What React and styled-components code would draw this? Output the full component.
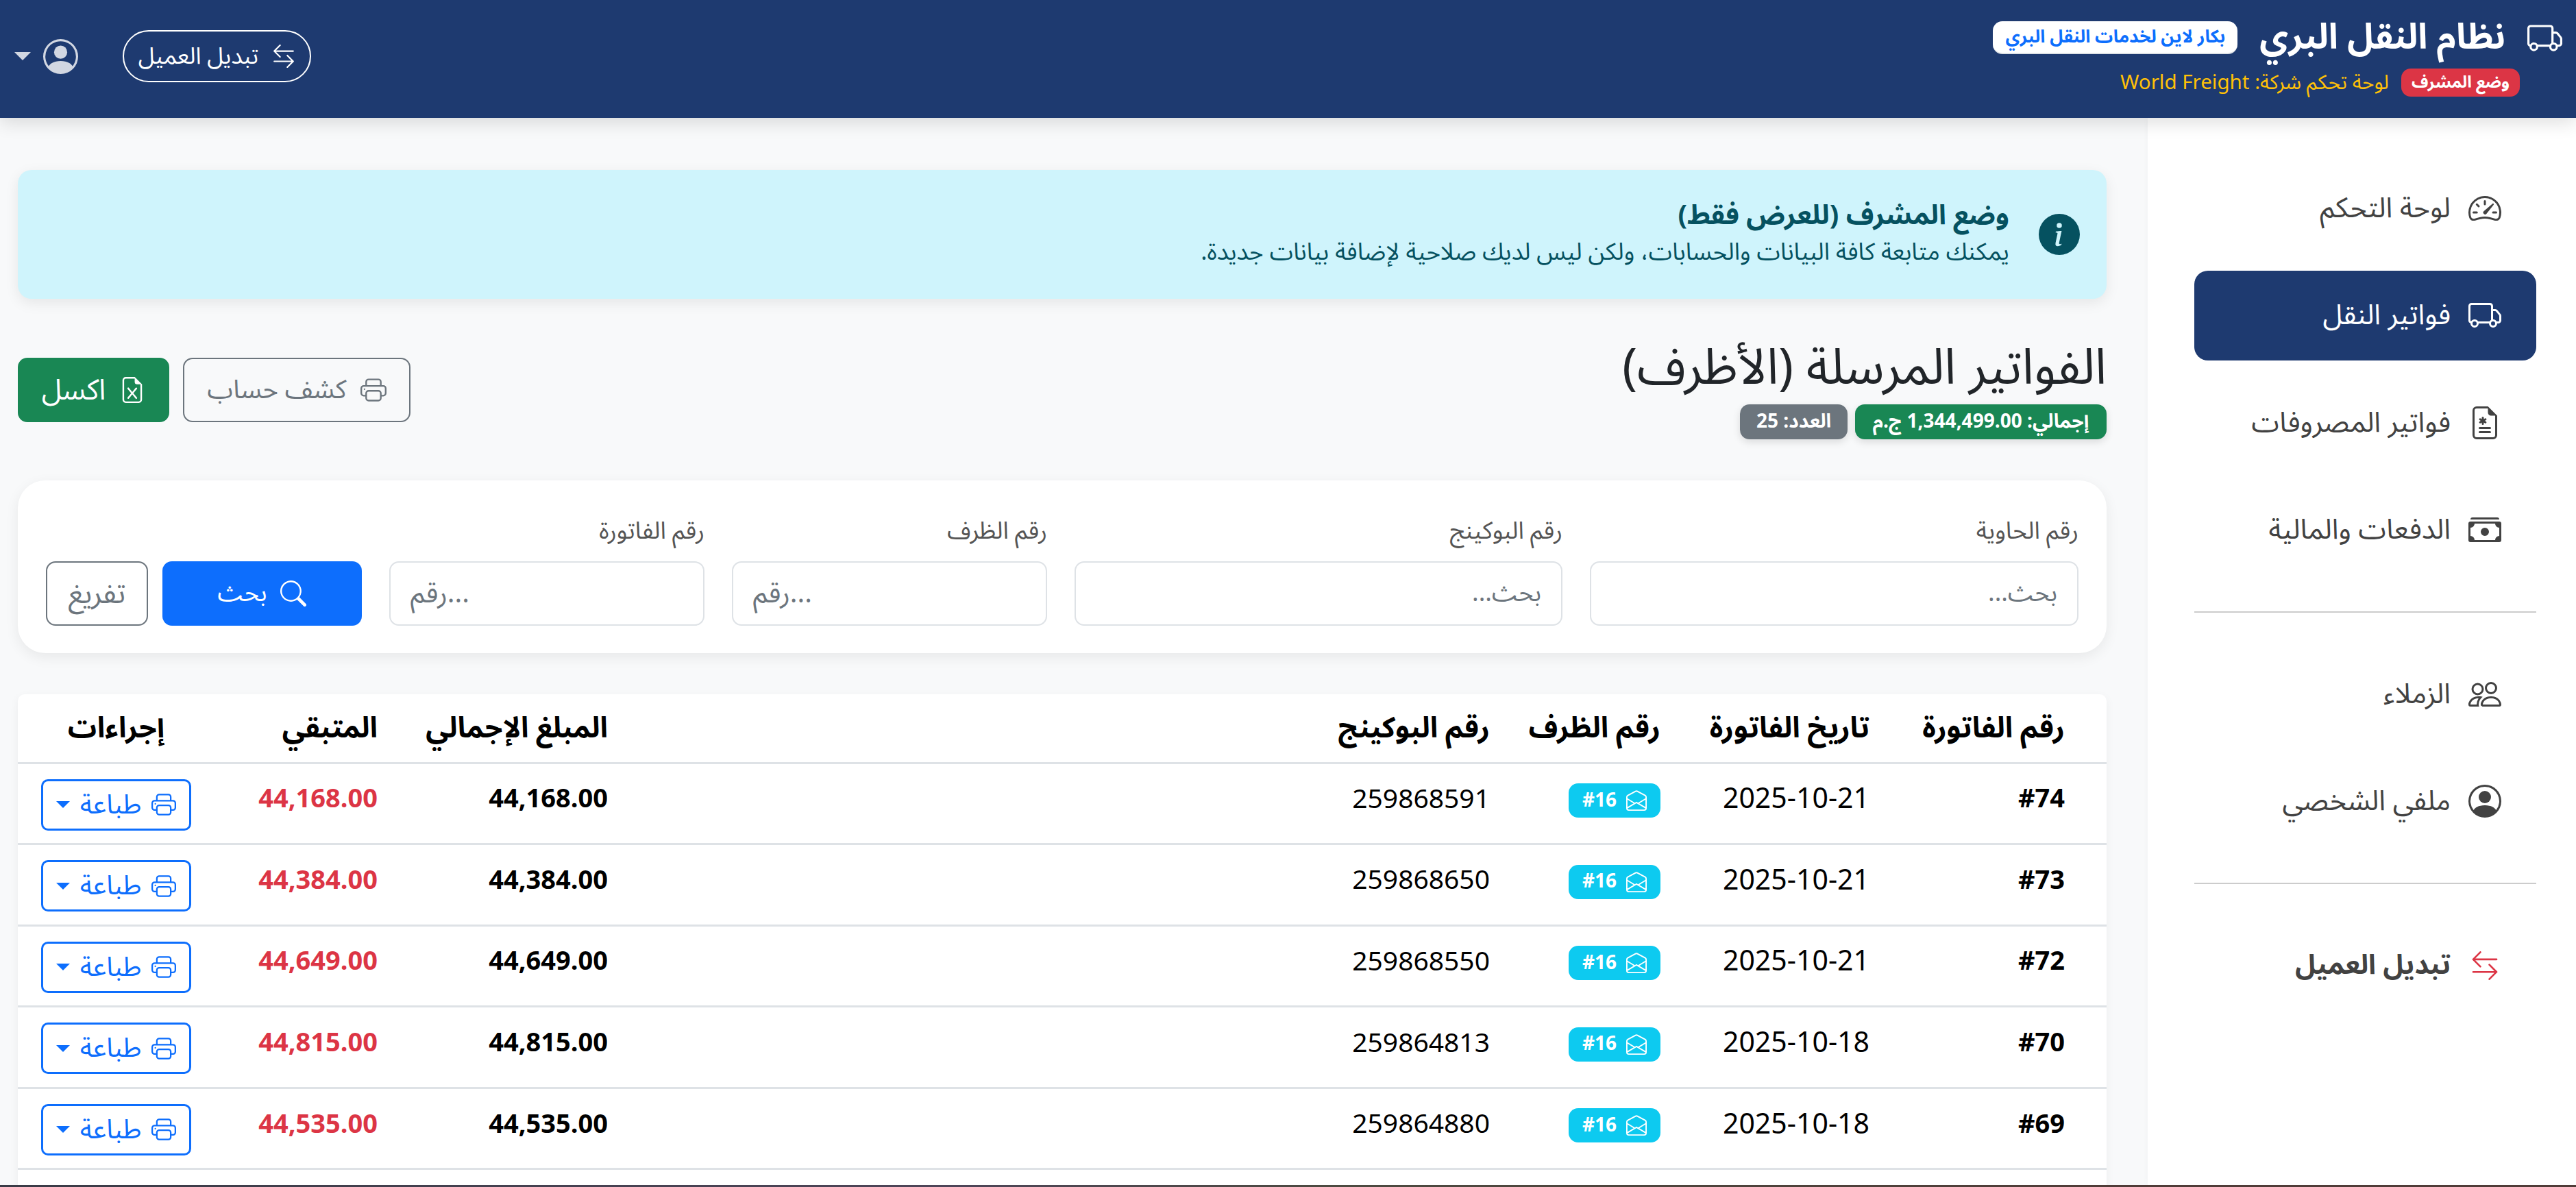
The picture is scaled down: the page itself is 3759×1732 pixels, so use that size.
import React from 'react';
import styled, { createGlobalStyle, css } from 'styled-components';
import { BsTruck, BsSpeedometer2, BsFileEarmarkMedical, BsCashStack, BsPeople, BsPersonCircle, BsArrowLeftRight, BsInfoCircleFill, BsPrinter, BsFileEarmarkExcel, BsSearch, BsEnvelopeOpen } from 'react-icons/bs';

const FONT = `"Noto Sans Arabic", "Noto Kufi Arabic", "Open Sans", "Noto Sans", "DejaVu Sans", sans-serif`;

const Global = createGlobalStyle`
  * { box-sizing: border-box; }
  html, body { margin: 0; height: 100%; }
  body { font-family: ${FONT}; background: #f8f9fa; color: #212529; overflow: hidden; }
`;

const Page = styled.div`
  direction: rtl;
  width: 3759px;
  height: 1732px;
  display: flex;
  flex-direction: column;
  overflow: hidden;
`;

const Header = styled.header`
  height: 172px;
  flex: none;
  background: #1e3a70;
  color: #fff;
  display: flex;
  justify-content: space-between;
  align-items: flex-start;
  padding: 25px 20px 0 21px;
  box-shadow: 0 8px 24px rgba(0,0,0,.12);
  position: relative;
  z-index: 2;
`;

const Brand = styled.div`display: flex; flex-direction: column; gap: 15px;`;
const BrandRow = styled.div`
  display: flex; align-items: center; gap: 32px; font-size: 51.5px; font-weight: 700; height: 60px; line-height: 60px;
  > svg { font-size: 51px; }
`;
const WhiteBadge = styled.span`
  background: #fff; color: #0d6efd; font-size: 26px; line-height: 48px; font-weight: 700;
  border-radius: 14px; width: 357px; height: 48px; display: inline-flex; align-items: center; justify-content: center;
  border-bottom: 2px solid #dee2e6;
`;
const BrandSub = styled.div`display: flex; align-items: center; gap: 18px; padding-right: 62px; font-size: 29.5px; color: #ffc107; height: 41px;`;
const RedBadge = styled.span`
  background: #dc3545; color: #fff; font-size: 24px; font-weight: 700; border-radius: 14px; width: 173px; height: 41px;
  display: inline-flex; align-items: center; justify-content: center;
`;
const HeaderEnd = styled.div`display: flex; align-items: center; gap: 65px; padding-top: 19px;`;
const SwitchButton = styled.button`
  font-family: inherit; background: none; color: #fff; border: 2px solid #fff; border-radius: 38px; height: 76px; width: 275px;
  font-size: 34px; display: flex; align-items: center; justify-content: center; gap: 20px; padding: 0;
  svg { font-size: 34px; }
`;
const UserMenu = styled.div`display: flex; align-items: center; gap: 18px; color: rgba(255,255,255,.8); font-size: 51px;`;
const Caret = styled.span`
  width: 0; height: 0; border-style: solid; border-color: currentColor transparent transparent transparent;
  border-width: ${p => p.$s || 12}px ${p => p.$s || 12}px 0 ${p => p.$s || 12}px;
`;

const Body = styled.div`flex: 1; display: flex; min-height: 0; overflow: hidden;`;

const Sidebar = styled.nav`
  width: 625px; flex: none; background: #fff; padding: 66px 58px 0 68px; display: flex; flex-direction: column;
  box-shadow: 0 0 10px rgba(0,0,0,.03);
`;
const NavItem = styled.a`
  height: 131px; flex: none; display: flex; align-items: center; gap: 26px; padding-right: 51px; border-radius: 20px; font-size: 41px; margin-bottom: 25.5px;
  color: ${p => p.$active ? '#fff' : '#424242'};
  background: ${p => p.$active ? '#1e3a70' : 'transparent'};
  svg { font-size: 48px; flex: none; }
  ${p => p.$switch && css`font-weight: 700; font-size: 40px; svg { color: #dc3545; font-size: 42px; margin: 0 3px; }`}
`;
const NavRule = styled.hr`
  border: 0; border-top: 2px solid #ccc; margin: 28px 0 0; width: 100%; flex: none;
`;
const NavGroupGap = styled.div`height: 53px; flex: none;`;

const Main = styled.main`flex: 1; min-width: 0; padding: 76px 60px 0 26px; display: flex; flex-direction: column;`;

const Alert = styled.div`
  height: 188px; background: #cff4fc; color: #055160; border-radius: 20px; display: flex; align-items: center; gap: 43px; padding: 0 39px;
  box-shadow: 0 6px 20px rgba(0,0,0,.08); flex: none;
  > svg { font-size: 60px; flex: none; }
`;
const AlertText = styled.div`padding-bottom: 4px;`;
const AlertTitle = styled.div`font-size: 40px; font-weight: 700; line-height: 56px;`;
const AlertBody = styled.div`font-size: 34.8px; line-height: 50px;`;

const TitleBar = styled.div`display: flex; justify-content: space-between; align-items: center; margin-top: 61px; flex: none;`;
const TitleBlock = styled.div`display: flex; flex-direction: column; gap: 13px;`;
const PageTitle = styled.h1`margin: 0; font-size: 72.5px; font-weight: 400; line-height: 80px; color: #212529;`;
const Badges = styled.div`display: flex; gap: 11px;`;
const Badge = styled.span`
  height: 51px; border-radius: 14px; width: ${p => p.$w}px; color: #fff; font-size: 28px; font-weight: 700; display: inline-flex; align-items: center; justify-content: center;
  background: ${p => p.$bg}; box-shadow: 0 4px 12px rgba(0,0,0,.12);
`;
const Actions = styled.div`display: flex; gap: 20px;`;
const Btn = styled.button`
  font-family: inherit; height: 94px; border-radius: 14px; font-size: ${p => p.$fs || 38}px; display: inline-flex; align-items: center; justify-content: center; gap: 20px; padding: 0;
  width: ${p => p.$w}px;
  ${p => p.$kind === 'green' && css`background:#198754;color:#fff;border:0;`}
  ${p => p.$kind === 'gray' && css`background:transparent;color:#6c757d;border:2px solid #6c757d;`}
  ${p => p.$kind === 'blue' && css`background:#0d6efd;color:#fff;border:0;`}
  svg { font-size: 38px; }
`;

const FilterCard = styled.div`
  margin-top: 60px; height: 252px; background: #fff; border-radius: 40px; padding: 0 41px 40px; flex: none;
  box-shadow: 0 6px 20px rgba(0,0,0,.07);
  display: grid; grid-template-columns: 713px 712px 460px 460px 1fr; column-gap: 40px; align-items: end;
`;
const Field = styled.label`display: flex; flex-direction: column; gap: 22px;`;
const FieldLabel = styled.span`font-size: 35px; color: #555; line-height: 44px;`;
const Input = styled.input`
  font-family: inherit; height: 94px; width: 100%; border: 2px solid #dee2e6; border-radius: 14px; padding: 0 29px; background: #fff; outline: none;
  font-size: ${p => p.$num ? 40 : 36}px;
  direction: ${p => p.$num ? 'ltr' : 'rtl'};
  &::placeholder { color: #6c757d; }
`;
const FilterActions = styled.div`display: flex; gap: 21px;`;

const TableWrap = styled.div`margin-top: 60px; background: #fff; flex: none; border-radius: 10px 10px 0 0; box-shadow: 0 4px 14px rgba(0,0,0,.05);`;
const Table = styled.table`width: 3048px; border-collapse: collapse; table-layout: fixed;`;
const Th = styled.th`
  height: 100px; font-size: 42px; font-weight: 700; color: #000; text-align: ${p => p.$center ? 'center' : 'right'};
  padding: 0 ${p => p.$center ? 0 : p.$first ? 61 : 29}px 0 0; border-bottom: 3px solid #dee2e6;
`;
const Td = styled.td`
  height: 118.6px; font-size: ${p => p.$fs || 38}px; color: ${p => p.$color || '#000'}; font-weight: ${p => p.$bold ? 700 : 400};
  padding: 0 ${p => p.$first ? 61 : 29}px 12px 0; border-bottom: 3px solid #dee2e6; text-align: right;
  ${p => p.$center && css`padding: 0; text-align: center;`}
`;
const EnvBadge = styled.span`
  display: inline-flex; align-items: center; gap: 14px; height: 50px; width: 134px; justify-content: center; border-radius: 14px; background: #0dcaf0; color: #fff; font-size: 28px; font-weight: 700; vertical-align: middle;
  svg { font-size: 30px; }
`;
const PrintBtn = styled.button`
  font-family: inherit; width: 219px; height: 75px; background: #fff; border: 3px solid #0d6efd; color: #0d6efd; border-radius: 10px; font-size: 39px; line-height: 1;
  display: inline-flex; align-items: center; justify-content: center; gap: 15px; padding: 0; vertical-align: middle;
  svg { font-size: 36px; }
`;
const Strip = styled.div`
  height: 3px; flex: none;
  background: linear-gradient(to right, #3a3b46 0%, #4e4558 37%, #4c4a40 52%, #503c38 82%, #503c38 100%);
`;

const rows = [
  ['#74','2025-10-21','259868591','44,168.00'],
  ['#73','2025-10-21','259868650','44,384.00'],
  ['#72','2025-10-21','259868550','44,649.00'],
  ['#70','2025-10-18','259864813','44,815.00'],
  ['#69','2025-10-18','259864880','44,535.00'],
];
const widths = [317, 305, 249, 1287, 336, 267, 287];

export default function App() {
  return (
    <Page>
      <Global />
      <Header>
        <Brand>
          <BrandRow><BsTruck /><span>نظام النقل البري</span><WhiteBadge>بكار لاين لخدمات النقل البري</WhiteBadge></BrandRow>
          <BrandSub><RedBadge>وضع المشرف</RedBadge><span>لوحة تحكم شركة: World Freight</span></BrandSub>
        </Brand>
        <HeaderEnd>
          <SwitchButton><BsArrowLeftRight /><span>تبديل العميل</span></SwitchButton>
          <UserMenu><BsPersonCircle /><Caret /></UserMenu>
        </HeaderEnd>
      </Header>
      <Body>
        <Sidebar>
          <NavItem><BsSpeedometer2 />لوحة التحكم</NavItem>
          <NavItem $active><BsTruck />فواتير النقل</NavItem>
          <NavItem><BsFileEarmarkMedical />فواتير المصروفات</NavItem>
          <NavItem><BsCashStack />الدفعات والمالية</NavItem>
          <NavRule />
          <NavGroupGap />
          <NavItem><BsPeople />الزملاء</NavItem>
          <NavItem><BsPersonCircle />ملفي الشخصي</NavItem>
          <NavRule />
          <NavGroupGap />
          <NavItem $switch><BsArrowLeftRight />تبديل العميل</NavItem>
        </Sidebar>
        <Main>
          <Alert>
            <BsInfoCircleFill />
            <AlertText>
              <AlertTitle>وضع المشرف (للعرض فقط)</AlertTitle>
              <AlertBody>يمكنك متابعة كافة البيانات والحسابات، ولكن ليس لديك صلاحية لإضافة بيانات جديدة.</AlertBody>
            </AlertText>
          </Alert>
          <TitleBar>
            <TitleBlock>
              <PageTitle>الفواتير المرسلة (الأظرف)</PageTitle>
              <Badges>
                <Badge $bg="#198754" $w={367}>إجمالي: 1,344,499.00 ج.م</Badge>
                <Badge $bg="#6c757d" $w={157}>العدد: 25</Badge>
              </Badges>
            </TitleBlock>
            <Actions>
              <Btn $kind="gray" $w={332}><BsPrinter />كشف حساب</Btn>
              <Btn $kind="green" $w={221} $fs={42}><BsFileEarmarkExcel />اكسل</Btn>
            </Actions>
          </TitleBar>
          <FilterCard>
            <Field><FieldLabel>رقم الحاوية</FieldLabel><Input placeholder="بحث..." /></Field>
            <Field><FieldLabel>رقم البوكينج</FieldLabel><Input placeholder="بحث..." /></Field>
            <Field><FieldLabel>رقم الظرف</FieldLabel><Input $num placeholder="رقم..." /></Field>
            <Field><FieldLabel>رقم الفاتورة</FieldLabel><Input $num placeholder="رقم..." /></Field>
            <FilterActions>
              <Btn $kind="blue" $w={291} $fs={36}><BsSearch />بحث</Btn>
              <Btn $kind="gray" $w={149} $fs={42}>تفريغ</Btn>
            </FilterActions>
          </FilterCard>
          <TableWrap>
            <Table>
              <colgroup>{widths.map((w, i) => <col key={i} style={{ width: w }} />)}</colgroup>
              <thead>
                <tr>
                  <Th $first>رقم الفاتورة</Th><Th>تاريخ الفاتورة</Th><Th>رقم الظرف</Th><Th>رقم البوكينج</Th><Th>المبلغ الإجمالي</Th><Th>المتبقي</Th><Th $center>إجراءات</Th>
                </tr>
              </thead>
              <tbody>
                {rows.map((r, i) => (
                  <tr key={i}>
                    <Td $first $bold><bdi>{r[0]}</bdi></Td>
                    <Td $fs={41}>{r[1]}</Td>
                    <Td><EnvBadge><BsEnvelopeOpen /><bdi>#16</bdi></EnvBadge></Td>
                    <Td $fs={39}>{r[2]}</Td>
                    <Td $bold>{r[3]}</Td>
                    <Td $bold $color="#dc3545">{r[3]}</Td>
                    <Td $center><PrintBtn><BsPrinter />طباعة<Caret $s={10} /></PrintBtn></Td>
                  </tr>
                ))}
                <tr>
                  <Td $first /><Td /><Td /><Td /><Td /><Td />
                  <Td $center><PrintBtn aria-label="طباعة" /></Td>
                </tr>
              </tbody>
            </Table>
          </TableWrap>
        </Main>
      </Body>
      <Strip />
    </Page>
  );
}
